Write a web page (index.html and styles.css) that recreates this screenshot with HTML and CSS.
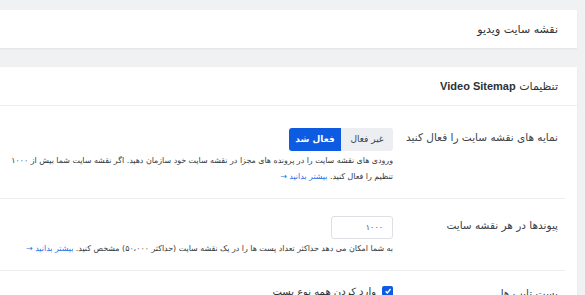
FILE: index.html
```html
<!DOCTYPE html>
<html lang="fa" dir="rtl">

<head>
    <meta charset="UTF-8" />
    <meta name="viewport" content="width=device-width, initial-scale=1.0" />
    <title>نقشه سایت ویدیو</title>
    <link rel="stylesheet" href="styles.css">
</head>

<body>
    <div class="page">
        <div class="card page-title">
            <h1>نقشه سایت ویدیو</h1>
        </div>

        <div class="card settings">
            <div class="card-header">
                <h2>تنظیمات <b>Video Sitemap</b></h2>
            </div>

            <div class="field first">
                <div class="field-label">نمایه های نقشه سایت را فعال کنید</div>
                <div class="field-control">
                    <div class="switch-group">
                        <button class="switch-btn">غیر فعال</button>
                        <button class="switch-btn active">فعال شد</button>
                    </div>
                    <p class="field-desc">ورودی های نقشه سایت را در پرونده های مجزا در نقشه سایت خود سازمان دهید. اگر نقشه سایت شما بیش از ۱۰۰۰<br>تنظیم را فعال کنید. <a href="#">بیشتر بدانید</a> <span class="arrow">&rarr;</span></p>
                </div>
            </div>

            <div class="field">
                <div class="field-label">پیوندها در هر نقشه سایت</div>
                <div class="field-control">
                    <input type="text" class="num-input" value="۱۰۰۰" />
                    <p class="field-desc">به شما امکان می دهد حداکثر تعداد پست ها را در یک نقشه سایت (حداکثر ۵۰،۰۰۰) مشخص کنید. <a href="#">بیشتر بدانید</a> <span class="arrow">&rarr;</span></p>
                </div>
            </div>

            <div class="field">
                <div class="field-label">پست تایپ ها</div>
                <div class="field-control">
                    <label class="check">
                        <span class="check-box">
                            <svg width="8" height="8" viewBox="0 0 10 10"><path d="M2 5.2 L4.2 7.4 L8.2 2.6" fill="none" stroke="#fff" stroke-width="1.8" /></svg>
                        </span>
                        وارد کردن همه نوع پست
                    </label>
                </div>
            </div>
        </div>
    </div>
</body>

</html>
```

FILE: styles.css
```css
body {
    margin: 0;
    background: #f0f1f3;
    font-family: "DejaVu Sans", sans-serif;
    color: #3c434a;
}

.page {
    padding: 10px 8px 0 0;
    margin-left: -10px;
}

.card {
    background: #ffffff;
    box-shadow: 0 1px 2px rgba(0, 0, 0, 0.06);
}

.page-title {
    height: 38px;
    display: flex;
    align-items: center;
    padding-right: 19px;
}

.page-title h1,
.card-header h2 {
    margin: 0;
    font-size: 11px;
    font-weight: normal;
    color: #2c3338;
}

.card-header h2 b {
    font-family: "Liberation Sans", sans-serif;
    font-weight: bold;
    font-size: 11px;
}

.settings {
    margin-top: 19px;
    padding-right: 12px;
    padding-bottom: 20px;
}

.card-header {
    height: 38px;
    display: flex;
    align-items: center;
    margin-right: -12px;
    padding-right: 19px;
    border-bottom: 1px solid #eceef1;
}

.field {
    display: flex;
    padding: 16px 7px 13px 0;
    border-bottom: 1px solid #eceef1;
}

.field.first {
    padding-top: 21px;
}

.field:last-child {
    border-bottom: none;
    padding-top: 15px;
    padding-bottom: 0;
}

.field-label {
    width: 165px;
    flex-shrink: 0;
    font-size: 10.5px;
    color: #3c434a;
    padding-top: 4px;
}

.field:last-child .field-label {
    padding-top: 1px;
}

.field-control {
    flex: 1;
    padding-left: 10px;
}

.switch-group {
    display: inline-flex;
    border-radius: 3px;
    overflow: hidden;
}

.switch-btn {
    font-family: inherit;
    font-size: 9px;
    border: none;
    height: 23px;
    width: 52px;
    background: #eceef1;
    color: #3c434a;
    padding: 0;
}

.switch-btn.active {
    background: #0d5be1;
    color: #ffffff;
    font-weight: bold;
}

.field-desc {
    margin: 2px 0 0;
    font-size: 7.9px;
    line-height: 16px;
    color: #32373c;
    white-space: nowrap;
}

.field-desc a {
    color: #1f6fe5;
    text-decoration: none;
}

.arrow {
    color: #1f6fe5;
}

.num-input {
    font-family: inherit;
    font-size: 8px;
    width: 62px;
    height: 23px;
    box-sizing: border-box;
    border: 1px solid #dcdfe4;
    border-radius: 3px;
    padding: 0 9px;
    color: #50575e;
    text-align: right;
}

.check {
    display: flex;
    align-items: center;
    gap: 6px;
    font-size: 10px;
    color: #2c3338;
}

.check-box {
    width: 11px;
    height: 11px;
    background: #0d5be1;
    border-radius: 2px;
    display: inline-flex;
    align-items: center;
    justify-content: center;
}
```
